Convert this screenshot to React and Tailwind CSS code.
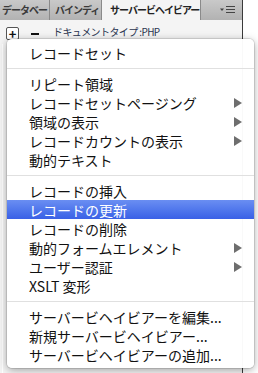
const FONT = { fontFamily: '"Noto Sans CJK JP", "Noto Sans", sans-serif' }

const GROUPS = [
  [{ label: 'レコードセット' }],
  [
    { label: 'リピート領域' },
    { label: 'レコードセットページング', sub: true },
    { label: '領域の表示', sub: true },
    { label: 'レコードカウントの表示', sub: true },
    { label: '動的テキスト' },
  ],
  [
    { label: 'レコードの挿入' },
    { label: 'レコードの更新', active: true },
    { label: 'レコードの削除' },
    { label: '動的フォームエレメント', sub: true },
    { label: 'ユーザー認証', sub: true },
    { label: 'XSLT 変形' },
  ],
  [
    { label: 'サーバービヘイビアーを編集...' },
    { label: '新規サーバービヘイビアー...' },
    { label: 'サーバービヘイビアーの追加...' },
  ],
]

function Arrow() {
  return (
    <svg width="8" height="10" viewBox="0 0 8 10" aria-hidden="true">
      <path d="M0 0L8 5L0 10Z" fill="#6e6e6e" />
    </svg>
  )
}

function MenuIcon() {
  return (
    <svg width="16" height="10" viewBox="0 0 16 10" aria-hidden="true">
      <path d="M0 3.5h4L2 6Z" fill="#444" />
      <path d="M6 1.5h9M6 4.5h9M6 7.5h9" stroke="#444" strokeWidth="1" />
    </svg>
  )
}

export default function App() {
  return (
    <div className="relative h-[373px] w-[258px] overflow-hidden bg-white" style={FONT}>
      {/* panel */}
      <div className="w-[243px] border-r border-[#3a3a3a]">
        {/* tabs */}
        <div className="flex h-[20px] whitespace-nowrap bg-gradient-to-b from-[#c9c9c9] to-[#b2b2b2] text-[10px] font-bold leading-[20px] tracking-[-1px] text-[#3a3a3a]">
          <div className="w-[50px] overflow-hidden border-r border-[#8a8a8a] pl-[2px]">データベー</div>
          <div className="w-[52px] overflow-hidden border-r border-[#8a8a8a] pl-[5px]">バインディ</div>
          <div className="w-[98px] bg-[#f4f4f4] pl-[8px] text-[#222]">サーバービヘイビアー</div>
          <div className="flex flex-1 items-center justify-end border-l border-[#8a8a8a] pr-[6px]">
            <MenuIcon />
          </div>
        </div>
        {/* toolbar */}
        <div className="flex h-[353px] flex-col bg-[#f4f4f4]">
          <div className="flex items-center pt-[7px]">
            <div className="ml-[6px] flex h-[13px] w-[13px] items-center justify-center rounded-[2px] border border-[#555] bg-white text-[13px] font-bold leading-none text-[#111]">+</div>
            <div className="ml-[12px] h-[2px] w-[8px] bg-[#111]" />
            <div className="ml-[14px] -translate-y-[2px] whitespace-nowrap text-[10px] leading-none tracking-[-0.6px] text-[#2a3550]">ドキュメントタイプ :PHP</div>
          </div>
          <div className="ml-[2px] mt-[4px] w-[1px] flex-1 bg-white" />
        </div>
      </div>

      {/* popup menu */}
      <div className="absolute left-[7px] top-[39px] w-[247px] rounded-[5px] bg-white/[0.97] py-[4px] shadow-[0_2px_8px_rgba(0,0,0,0.35)] ring-1 ring-black/10">
        {GROUPS.map((group, gi) => (
          <div key={gi}>
            {gi > 0 && (
              <div className="flex h-[12px] items-center">
                <div className="h-px w-full bg-[#e0e0e0]" />
              </div>
            )}
            {group.map((item) => (
              <div
                key={item.label}
                className={`flex h-[19px] items-center justify-between pl-[22px] pr-[12px] text-[14px] leading-none ${
                  item.active
                    ? 'bg-gradient-to-b from-[#6a8ef2] to-[#3a60e6] text-white'
                    : 'text-[#111]'
                }`}
              >
                <span>{item.label}</span>
                {item.sub && <Arrow />}
              </div>
            ))}
          </div>
        ))}
      </div>
    </div>
  )
}
